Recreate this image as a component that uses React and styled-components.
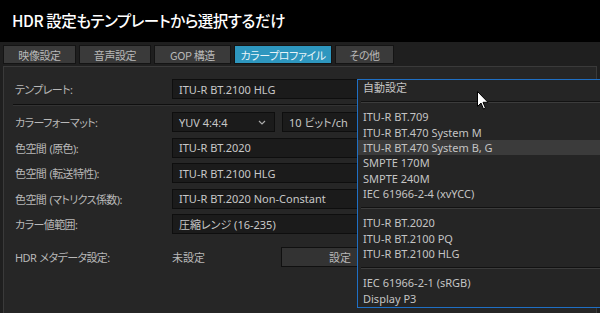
import styled, { createGlobalStyle } from "styled-components";

const GlobalStyle = createGlobalStyle`
  html, body {
    margin: 0;
    padding: 0;
    background: #000;
  }
  body {
    font-family: "Noto Sans", "Noto Sans CJK JP", sans-serif;
    font-feature-settings: "palt" 1;
  }
`;

const Screen = styled.div`
  position: relative;
  width: 600px;
  height: 313px;
  overflow: hidden;
  background: #1f1f1f;
`;

const TitleBar = styled.div`
  height: 42px;
  background: #000;
  display: flex;
  align-items: center;
  padding: 0 0 0 12px;
  box-sizing: border-box;
`;

const Title = styled.h1`
  margin: 0;
  font-family: "Noto Sans CJK JP", sans-serif;
  font-size: 15.5px;
  font-weight: 500;
  letter-spacing: -0.45px;
  color: #fff;
  padding-bottom: 2px;
`;

const Tabs = styled.div`
  display: flex;
  gap: 3px;
  padding: 3px 0 0 3px;
  height: 19px;
`;

const Tab = styled.div`
  width: ${p => p.w}px;
  box-sizing: border-box;
  height: 19px;
  display: flex;
  align-items: center;
  justify-content: center;
  border: 1px solid #141414;
  background: ${p => (p.active ? "#2e97bf" : "#3a3a3a")};
  color: ${p => (p.active ? "#e8f4f8" : "#b8b8b8")};
  font-family: "Noto Sans CJK JP", sans-serif;
  font-size: 11px;
  letter-spacing: -0.4px;
`;

const Panel = styled.div`
  margin: 2px 3px 0 3px;
  height: 260px;
  box-sizing: border-box;
  border: 1px solid #3a3a3a;
  border-bottom: none;
  background: #262626;
  padding: 12px 0 0 10px;
`;

const Row = styled.div`
  display: flex;
  align-items: center;
  height: 20px;
  margin-bottom: ${p => p.mb ?? 5.5}px;
`;

const Label = styled.div`
  width: 157px;
  flex: none;
  padding-left: 1px;
  color: #b8b8b8;
  font-size: 11px;
  letter-spacing: -0.6px;
  word-spacing: 1px;
`;

const Field = styled.div`
  box-sizing: border-box;
  height: 20px;
  width: ${p => (p.w ? `${p.w}px` : "auto")};
  flex: ${p => (p.w ? "none" : "1")};
  display: flex;
  align-items: center;
  justify-content: space-between;
  padding: 0 8px 0 6px;
  background: #1b1b1b;
  border: 1px solid #0e0e0e;
  color: #c8c8c8;
  font-size: 11px;
  margin-right: ${p => p.mr ?? 0}px;
`;

const Divider = styled.div`
  height: 1px;
  background: #0f0f0f;
  border-bottom: 1px solid #333;
  margin: 5px 0 6px -1px;
`;

const PlainValue = styled.div`
  width: 109px;
  flex: none;
  color: #b8b8b8;
  font-size: 11px;
`;

const Button = styled.div`
  box-sizing: border-box;
  width: 100px;
  flex: none;
  height: 20px;
  background: #333;
  border: 1px solid #101010;
  color: #b8b8b8;
  font-size: 11px;
  display: flex;
  align-items: center;
  justify-content: flex-end;
  padding-right: 29px;
`;

const Menu = styled.div`
  position: absolute;
  left: 357px;
  top: 79px;
  width: 260px;
  box-sizing: border-box;
  border: 1px solid #1f6fc4;
  background: #252525;
  padding: 0 0 1px 0;
`;

const MenuItem = styled.div`
  height: 15.35px;
  line-height: 15.35px;
  padding-left: 5px;
  font-size: 11px;
  color: #c4c4c4;
  white-space: nowrap;
  background: ${p => (p.hover ? "#3b3b3b" : "transparent")};
`;

const MenuSep = styled.div`
  height: 14px;
  display: flex;
  align-items: center;
  padding-left: 3px;
  &::after {
    content: "";
    flex: 1;
    height: 1px;
    background: #121212;
    border-bottom: 1px solid #3c3c3c;
  }
`;

const Cursor = styled.svg`
  position: absolute;
  left: 477px;
  top: 91px;
`;

const Chevron = () => (
  <svg width="8" height="5" viewBox="0 0 8 5">
    <path d="M1 1 L4 4 L7 1" stroke="#aaa" strokeWidth="1.2" fill="none" />
  </svg>
);

const tabs = [
  { t: "映像設定", w: 73 },
  { t: "音声設定", w: 72 },
  { t: "GOP 構造", w: 77 },
  { t: "カラープロファイル", w: 98, active: true },
  { t: "その他", w: 59 },
];

const groups = [
  ["自動設定"],
  [
    "ITU-R BT.709",
    "ITU-R BT.470 System M",
    "ITU-R BT.470 System B, G",
    "SMPTE 170M",
    "SMPTE 240M",
    "IEC 61966-2-4 (xvYCC)",
  ],
  ["ITU-R BT.2020", "ITU-R BT.2100 PQ", "ITU-R BT.2100 HLG"],
  ["IEC 61966-2-1 (sRGB)", "Display P3"],
];

export default function App() {
  return (
    <>
      <GlobalStyle />
      <Screen>
        <TitleBar>
          <Title>HDR 設定もテンプレートから選択するだけ</Title>
        </TitleBar>
        <Tabs>
          {tabs.map(tab => (
            <Tab key={tab.t} w={tab.w} active={tab.active}>
              {tab.t}
            </Tab>
          ))}
        </Tabs>
        <Panel>
          <Row mb={0}>
            <Label>テンプレート:</Label>
            <Field>ITU-R BT.2100 HLG</Field>
          </Row>
          <Divider />
          <Row>
            <Label>カラーフォーマット:</Label>
            <Field w={103} mr={7}>
              YUV 4:4:4 <Chevron />
            </Field>
            <Field>10 ビット/ch</Field>
          </Row>
          <Row>
            <Label>色空間 (原色):</Label>
            <Field>ITU-R BT.2020</Field>
          </Row>
          <Row>
            <Label>色空間 (転送特性):</Label>
            <Field>ITU-R BT.2100 HLG</Field>
          </Row>
          <Row>
            <Label>色空間 (マトリクス係数):</Label>
            <Field>ITU-R BT.2020 Non-Constant</Field>
          </Row>
          <Row mb={13}>
            <Label>カラー値範囲:</Label>
            <Field>圧縮レンジ (16-235)</Field>
          </Row>
          <Row>
            <Label>HDR メタデータ設定:</Label>
            <PlainValue>未設定</PlainValue>
            <Button>設定</Button>
          </Row>
        </Panel>
        <Menu>
          {groups.map((g, gi) => (
            <div key={gi}>
              {gi > 0 && <MenuSep />}
              {g.map(item => (
                <MenuItem key={item} hover={item === "ITU-R BT.470 System B, G"}>
                  {item}
                </MenuItem>
              ))}
            </div>
          ))}
        </Menu>
        <Cursor width="12" height="19" viewBox="0 0 12 19">
          <path
            d="M0.5 0.5 L0.5 15.5 L4 12 L6.5 18 L8.5 17.2 L6 11.3 L11 11.3 Z"
            fill="#fff"
            stroke="#000"
            strokeWidth="1"
            strokeLinejoin="round"
          />
        </Cursor>
      </Screen>
    </>
  );
}
